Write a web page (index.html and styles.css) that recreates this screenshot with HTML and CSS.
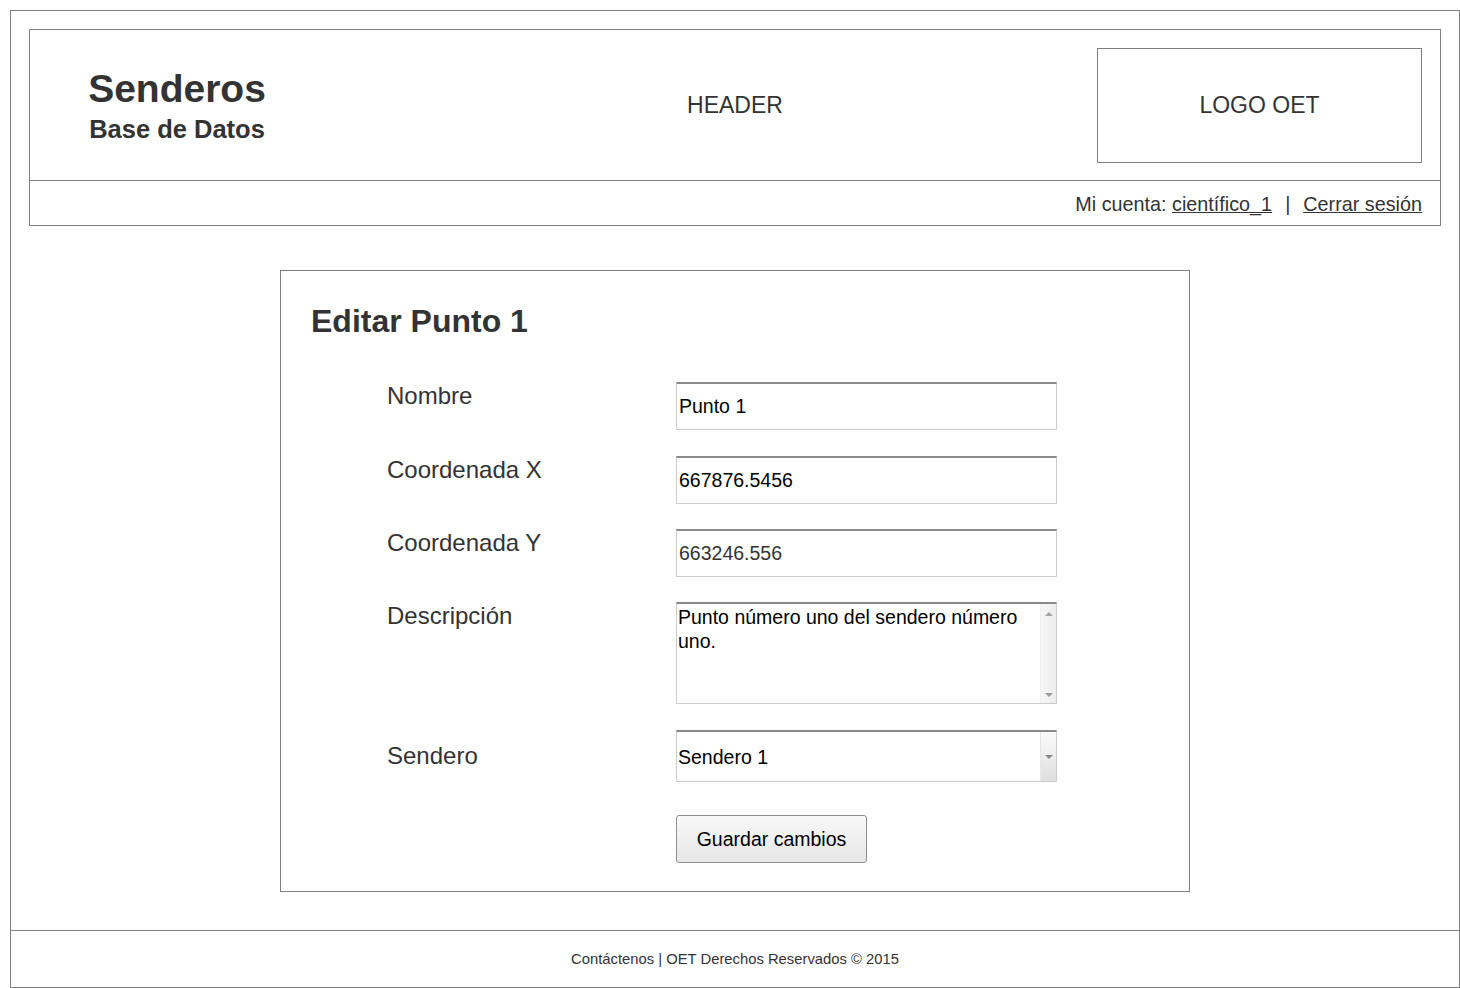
FILE: index.html
```html
<!DOCTYPE html>
<html lang="es">
<head>
<meta charset="utf-8">
<title>Senderos - Editar Punto 1</title>
<link rel="stylesheet" href="styles.css">
</head>
<body>
<div class="page">
  <div class="page-body">
    <header class="site-header">
      <div class="header-top">
        <div class="brand">
          <div class="brand-title">Senderos</div>
          <div class="brand-sub">Base de Datos</div>
        </div>
        <div class="header-label">HEADER</div>
        <div class="logo-box">LOGO OET</div>
      </div>
      <div class="account-bar">
        <span>Mi cuenta:&nbsp;</span><a href="#" class="link">científico_1</a><span class="sep">|</span><a href="#" class="link">Cerrar sesión</a>
      </div>
    </header>

    <main class="card">
      <h1 class="card-title">Editar Punto 1</h1>
      <form class="form-grid">
        <label class="field-label" for="nombre">Nombre</label>
        <input class="text-input" id="nombre" type="text" value="Punto 1">

        <label class="field-label field-label-shift" for="cx">Coordenada X</label>
        <input class="text-input shift" id="cx" type="text" value="667876.5456">

        <label class="field-label" for="cy">Coordenada Y</label>
        <input class="text-input text-muted" id="cy" type="text" value="663246.556">

        <label class="field-label" for="desc">Descripción</label>
        <div class="textarea-box">
          <textarea class="textarea" id="desc">Punto número uno del sendero número uno.</textarea>
          <div class="scrollbar">
            <span class="arrow-up"></span>
            <span class="arrow-down"></span>
          </div>
        </div>

        <label class="field-label field-label-center" for="sendero">Sendero</label>
        <div class="select-box shift">
          <select class="select" id="sendero">
            <option>Sendero 1</option>
          </select>
          <div class="select-arrow"><span class="arrow-down dark"></span></div>
        </div>

        <div class="spacer"></div>
        <div class="actions">
          <button type="button" class="btn">Guardar cambios</button>
        </div>
      </form>
    </main>
  </div>

  <footer class="site-footer">Contáctenos | OET Derechos Reservados © 2015</footer>
</div>
</body>
</html>
```

FILE: styles.css
```css
* {
  box-sizing: border-box;
}

html, body {
  margin: 0;
  padding: 0;
  background: #ffffff;
}

body {
  padding: 10px 0 0 10px;
  font-family: "Liberation Sans", Arial, sans-serif;
  color: #333333;
}

.page {
  width: 1450px;
  height: 978px;
  border: 1px solid #808080;
  display: flex;
  flex-direction: column;
}

.page-body {
  padding: 18px 18px 0 18px;
  flex: 1;
  display: flex;
  flex-direction: column;
}

/* Header */
.site-header {
  border: 1px solid #808080;
  height: 197px;
}

.header-top {
  height: 151px;
  border-bottom: 1px solid #808080;
  padding: 18px 18px 17px 18px;
  display: grid;
  grid-template-columns: 1fr auto 1fr;
  align-items: center;
}

.brand {
  justify-self: start;
  align-self: start;
  margin-left: 40px;
  margin-top: 19px;
  width: 178px;
  text-align: center;
}

.brand-title {
  font-size: 39px;
  font-weight: bold;
  line-height: 44px;
  color: #333333;
}

.brand-sub {
  margin-top: 3px;
  font-size: 25.5px;
  font-weight: bold;
  line-height: 30px;
  color: #333333;
  white-space: nowrap;
}

.header-label {
  font-size: 23px;
  color: #333333;
  justify-self: center;
}

.logo-box {
  justify-self: end;
  width: 325px;
  height: 115px;
  border: 1px solid #808080;
  display: flex;
  align-items: center;
  justify-content: center;
  font-size: 23px;
  color: #333333;
}

.account-bar {
  height: 44px;
  display: flex;
  align-items: center;
  justify-content: flex-end;
  padding-right: 18px;
  font-size: 19.8px;
  color: #333333;
  padding-top: 3px;
}

.link {
  color: #333333;
  text-decoration: underline;
}

.sep {
  margin: 0 13px;
}

/* Card */
.card {
  width: 910px;
  height: 622px;
  margin: 44px auto 0 auto;
  border: 1px solid #808080;
  padding: 32px 30px 0 30px;
}

.card-title {
  margin: 0;
  font-size: 32px;
  line-height: 37px;
  font-weight: bold;
  color: #333333;
}

.form-grid {
  margin: 42px 0 0 76px;
  display: grid;
  grid-template-columns: 289px 381px;
  row-gap: 25px;
  align-items: start;
}

.field-label {
  font-size: 24px;
  line-height: 27px;
  color: #333333;
}

.field-label-shift {
  margin-top: 1px;
}

.field-label-center {
  align-self: center;
}

.shift {
  margin-top: 1px;
}

.text-input {
  width: 381px;
  height: 48px;
  border: 1px solid #cccccc;
  border-top: 2px solid #8a8a8a;
  padding: 0 2px;
  font-family: "Liberation Sans", Arial, sans-serif;
  font-size: 19.5px;
  color: #000000;
  background: #ffffff;
  outline: none;
}

.text-muted {
  color: #333333;
}

.textarea-box {
  width: 381px;
  height: 102px;
  border: 1px solid #cccccc;
  border-top: 2px solid #8a8a8a;
  display: flex;
  background: #ffffff;
}

.textarea {
  flex: 1;
  border: none;
  resize: none;
  overflow: hidden;
  padding: 1px 1px;
  font-family: "Liberation Sans", Arial, sans-serif;
  font-size: 19.5px;
  line-height: 24px;
  color: #000000;
  outline: none;
}

.scrollbar {
  width: 16px;
  background: linear-gradient(to right, #f7f7f7, #ececec);
  border-left: 1px solid #f0f0f0;
  display: flex;
  flex-direction: column;
  justify-content: space-between;
  align-items: center;
  padding: 8px 0 6px 0;
}

.arrow-up {
  width: 0;
  height: 0;
  border-left: 4px solid transparent;
  border-right: 4px solid transparent;
  border-bottom: 4px solid #a3a3a3;
}

.arrow-down {
  width: 0;
  height: 0;
  border-left: 4px solid transparent;
  border-right: 4px solid transparent;
  border-top: 4px solid #9a9a9a;
}

.arrow-down.dark {
  border-top-color: #8a8a8a;
}

.select-box {
  width: 381px;
  height: 52px;
  border: 1px solid #cccccc;
  border-top: 2px solid #8a8a8a;
  display: flex;
  background: #ffffff;
}

.select {
  flex: 1;
  appearance: none;
  -webkit-appearance: none;
  border: none;
  background: #ffffff;
  padding: 0 1px;
  font-family: "Liberation Sans", Arial, sans-serif;
  font-size: 19.5px;
  color: #000000;
  outline: none;
}

.select-arrow {
  width: 16px;
  background: linear-gradient(to bottom, #fbfbfb, #dedede);
  border-left: 1px solid #e6e6e6;
  display: flex;
  align-items: center;
  justify-content: center;
}

.actions {
  margin-top: 8px;
}

.btn {
  width: 191px;
  height: 48px;
  border: 1px solid #8f8f8f;
  border-radius: 3px;
  background: linear-gradient(to bottom, #f9f9f9, #e6e6e6);
  font-family: "Liberation Sans", Arial, sans-serif;
  font-size: 19.5px;
  color: #000000;
  cursor: pointer;
}

/* Footer */
.site-footer {
  margin-top: 38px;
  height: 57px;
  border-top: 1px solid #808080;
  display: flex;
  align-items: center;
  justify-content: center;
  font-size: 14.8px;
  color: #333333;
}
```
